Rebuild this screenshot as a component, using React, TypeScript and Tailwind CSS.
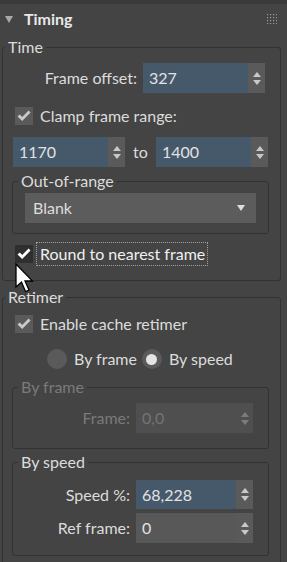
import React from 'react';

function SpinArrows({ dim = false }: { dim?: boolean }) {
  return (
    <svg width="8" height="13" viewBox="0 0 8 13" fill={dim ? '#7c7c7c' : '#c8c8c8'}>
      <path d="M4 0 L8 5 L0 5 Z" />
      <path d="M0 8 L8 8 L4 13 Z" />
    </svg>
  );
}

function Spinner({ value, width, blue = false, dim = false, height = 'h-[30px]' }: { value: string; width: string; blue?: boolean; dim?: boolean; height?: string }) {
  const field = blue ? 'bg-[#46596b]' : dim ? 'bg-[#4f4f4f]' : 'bg-[#585858]';
  const arrows = dim ? 'bg-[#4f4f4f]' : 'bg-[#5a5a5a]';
  return (
    <div className={`flex ${height} ${width}`}>
      <div className={`flex flex-1 items-center pl-[6px] ${field} ${dim ? 'text-[#747474]' : 'text-[#e2e2e2]'}`}>{value}</div>
      <div className={`flex w-[17px] items-center justify-center ${arrows}`}>
        <SpinArrows dim={dim} />
      </div>
    </div>
  );
}

function Check({ dark = false }: { dark?: boolean }) {
  return (
    <div className={`flex h-[18px] w-[18px] items-center justify-center ${dark ? 'bg-[#2f2f2f]' : 'bg-[#5a5a5a]'}`}>
      <svg width="14" height="12" viewBox="0 0 14 12" fill={dark ? '#ffffff' : '#c9c9c9'}>
        <path d="M0.5 6.5 L2.8 4.4 L5.2 7 L11.6 0.6 L13.5 2.5 L5.2 11 Z" />
      </svg>
    </div>
  );
}

function Radio({ on = false }: { on?: boolean }) {
  return (
    <div className="flex h-[20px] w-[20px] items-center justify-center rounded-full bg-[#5a5a5a]">
      {on && <div className="h-[11px] w-[11px] rounded-full bg-[#e4e4e4]" />}
    </div>
  );
}

function Group({ title, className, dim = false, children }: { title: string; className: string; dim?: boolean; children: React.ReactNode }) {
  return (
    <fieldset className={`rounded-[3px] border border-[#323232] ${className}`}>
      <legend className={`px-[3px] ${title === 'Time' || title === 'Retimer' ? 'ml-[2px]' : 'ml-[5px]'} ${dim ? 'text-[#7a7a7a]' : ''}`}>{title}</legend>
      {children}
    </fieldset>
  );
}

export default function App() {
  return (
    <div className="relative h-[562px] w-[287px] overflow-hidden bg-[#444444] font-['Lato',sans-serif] text-[16px] leading-[20px] text-[#dcdcdc] select-none">
      <div className="h-[4px] bg-[#3a3a3a]" />

      {/* rollout header */}
      <div className="flex h-[30px] items-center">
        <svg className="ml-[5px]" width="8" height="7" viewBox="0 0 8 7" fill="#a8a8a8">
          <path d="M0 0 L8 0 L4 7 Z" />
        </svg>
        <span className="ml-[11px] font-bold text-[#e8e8e8]">Timing</span>
        <svg className="mr-[10px] mb-[1px] ml-auto" width="10" height="10" viewBox="0 0 10 10" fill="#9c9c9c">
          {[0, 3, 6, 9].map(y => [0, 3, 6, 9].map(x => <rect key={`${x}-${y}`} x={x} y={y} width="1.2" height="1.2" />))}
        </svg>
      </div>

      <Group title="Time" className="mt-[3px] ml-[2px] w-[279px] pb-[14px]">
        <div className="mt-[6px] flex h-[30px] items-center justify-end gap-[6px] pr-[15px]">
          <span>Frame offset:</span>
          <Spinner value="327" width="w-[122px]" blue />
        </div>

        <div className="mt-[14px] ml-[12px] flex h-[18px] items-center gap-[7px]">
          <Check />
          <span>Clamp frame range:</span>
        </div>

        <div className="mt-[12px] ml-[10px] flex h-[30px] items-center">
          <Spinner value="1170" width="w-[112px]" blue />
          <span className="w-[31px] text-center">to</span>
          <Spinner value="1400" width="w-[112px]" blue />
        </div>

        <Group title="Out-of-range" className="mt-[4px] ml-[9px] w-[257px] pb-[10px]">
          <div className="mt-[2px] ml-[12px] flex h-[30px] w-[231px] items-center justify-between bg-[#5c5c5c] pr-[11px] pl-[8px]">
            <span>Blank</span>
            <svg width="8" height="6" viewBox="0 0 8 6" fill="#dedede">
              <path d="M0 0 L8 0 L4 6 Z" />
            </svg>
          </div>
        </Group>

        <div className="mt-[8px] ml-[12px] flex h-[24px] items-center gap-[3px]">
          <Check dark />
          <span className="flex h-[24px] items-center border border-dotted border-[#a0a0a0] pr-[2px] pl-[3px] text-[#f0f0f0]">
            Round to nearest frame
          </span>
        </div>
      </Group>

      <Group title="Retimer" className="mt-[6px] ml-[2px] w-[279px] pb-[30px]">
        <div className="mt-[8px] ml-[12px] flex h-[18px] items-center gap-[7px]">
          <Check />
          <span>Enable cache retimer</span>
        </div>

        <div className="mt-[16px] ml-[44px] flex h-[20px] items-center">
          <Radio />
          <span className="mr-[5px] ml-[7px]">By frame</span>
          <Radio on />
          <span className="ml-[7px]">By speed</span>
        </div>

        <Group title="By frame" dim className="mt-[8px] ml-[9px] w-[257px] pb-[15px]">
          <div className="mt-[6px] flex h-[30px] items-center justify-end gap-[6px] pr-[15px]">
            <span className="text-[#7a7a7a]">Frame:</span>
            <Spinner value="0,0" width="w-[117px]" dim />
          </div>
        </Group>

        <Group title="By speed" className="mt-[3px] ml-[9px] w-[257px] pb-[12px]">
          <div className="mt-[8px] flex items-center justify-end gap-[6px] pr-[15px]">
            <span>Speed %:</span>
            <Spinner value="68,228" width="w-[117px]" height="h-[29px]" blue />
          </div>
          <div className="mt-[4px] flex items-center justify-end gap-[6px] pr-[15px]">
            <span>Ref frame:</span>
            <Spinner value="0" width="w-[117px]" />
          </div>
        </Group>
      </Group>

      {/* mouse pointer */}
      <svg className="absolute top-[263px] left-[15px]" width="20" height="32" viewBox="0 0 20 32">
        <path d="M1 1 L1 24 L6.5 19 L10.5 28.5 L14 27 L10 18 L17.5 18 Z" fill="#ffffff" stroke="#000000" strokeWidth="1.3" strokeLinejoin="miter" />
      </svg>
    </div>
  );
}
